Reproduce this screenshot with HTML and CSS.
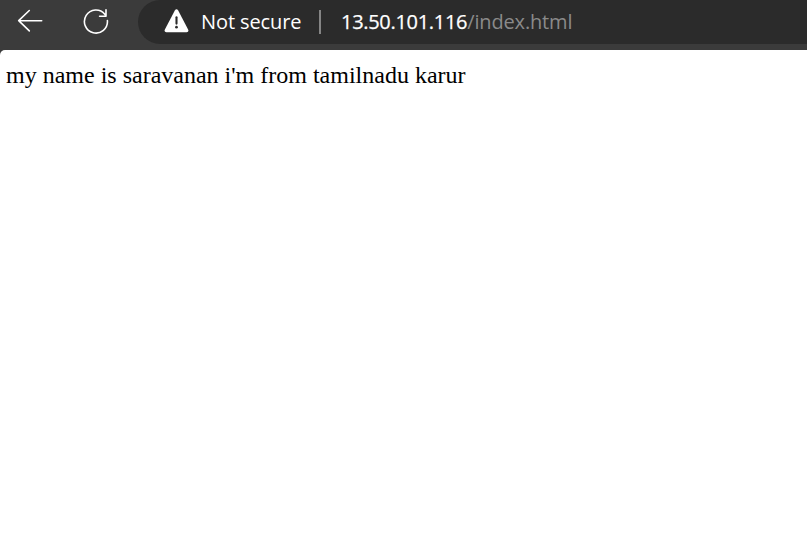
FILE: index.html
```html
<!DOCTYPE html>
<html lang="en">
<head>
<meta charset="utf-8">
<title>index.html</title>
<link rel="stylesheet" href="styles.css">
</head>
<body>
<header class="toolbar">
  <svg class="icon back" width="26" height="24" viewBox="0 0 26 24" fill="none" stroke="#fff" stroke-width="1.6" stroke-linecap="round" stroke-linejoin="round"><path d="M12.3 1.5 1.7 11.7l10.6 10.2M1.7 11.7h23"/></svg>
  <svg class="icon reload" width="26" height="26" viewBox="0 0 26 26" fill="none" stroke="#fff" stroke-width="1.6" stroke-linecap="round" stroke-linejoin="round"><path d="M24.4 12.6A11.5 11.5 0 1 1 21.8 6.2L23 7.8M23 1.8v6.4h-6.4"/></svg>
  <div class="address">
    <svg class="warning" width="25" height="24" viewBox="0 0 25 24"><path d="M10.8 1.4q1.7-2.2 3.4 0l9.9 19q1.1 2.6-1.5 2.9H2.4Q-.2 23 .9 20.4Z" fill="#fff"/><path d="M12.5 8.3v6.3" stroke="#2b2b2b" stroke-width="2.1" stroke-linecap="round"/><circle cx="12.5" cy="18.2" r="1.35" fill="#2b2b2b"/></svg>
    <span class="security">Not secure</span>
    <span class="divider"></span>
    <span class="url"><span class="host">13.50.101.116</span><span class="path">/index.html</span></span>
  </div>
</header>
<main class="page">my name is saravanan i'm from tamilnadu karur</main>
</body>
</html>
```
FILE: styles.css
```css
* { box-sizing: border-box; }
body { margin: 0; height: 555px; overflow: hidden; background: #3b3b3b; display: flex; flex-direction: column; }
.toolbar { height: 50px; flex: none; display: flex; align-items: flex-start; font-family: "Open Sans", sans-serif; font-size: 20px; line-height: 28px; white-space: nowrap; }
.icon { flex: none; }
.back { margin: 9px 0 0 17px; }
.reload { margin: 8px 0 0 40px; }
.address { flex: 1; height: 44px; margin-left: 29px; padding-left: 26px; background: #2b2b2b; border-radius: 22px 0 0 22px; display: flex; align-items: flex-start; }
.warning { flex: none; margin-top: 9px; }
.security { width: 101px; margin: 8px 0 0 12px; color: #fff; letter-spacing: -0.1px; }
.divider { width: 2px; height: 24px; margin: 10px 0 0 17px; background: #858585; }
.url { margin: 8px 0 0 20px; display: flex; }
.host { color: #fff; letter-spacing: -0.3px; -webkit-text-stroke: 0.25px #fff; }
.path { color: #8a8a8a; letter-spacing: -0.15px; }
.page { flex: 1; background: #fff; border-top-left-radius: 5px; padding: 11px 6px; font: 24px/28px "Liberation Serif", serif; color: #000; white-space: nowrap; }
```
